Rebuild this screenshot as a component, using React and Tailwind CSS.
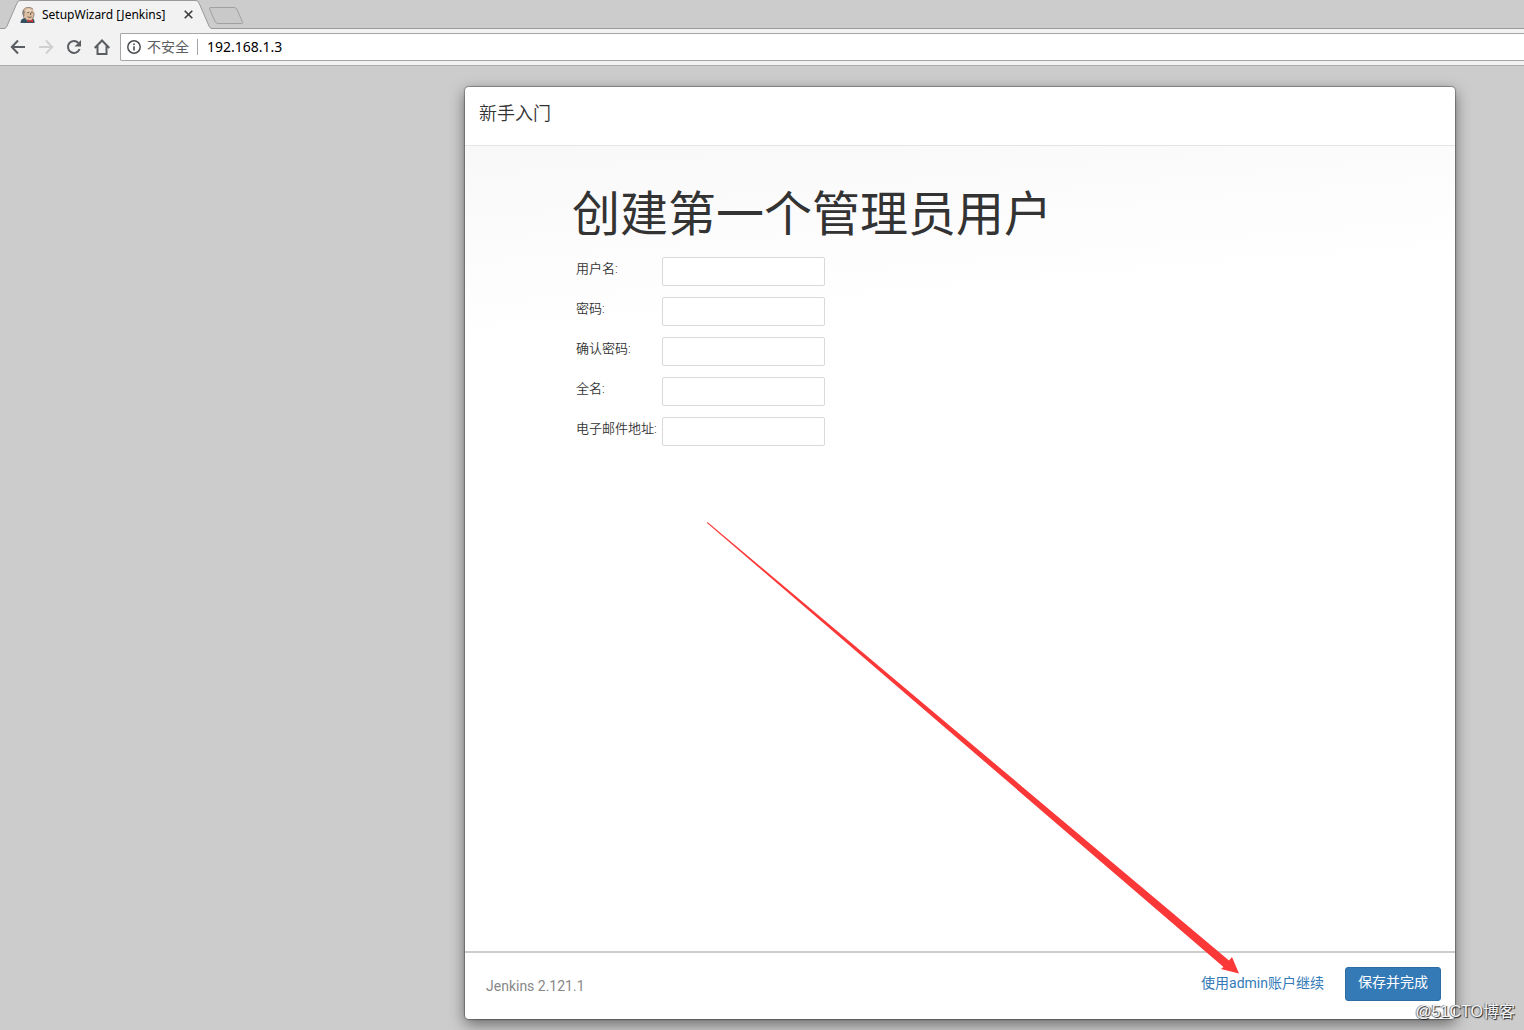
import React, { useState } from 'react';

// Campos del formulario del primer administrador
const FIELDS = [
  { id: 'username', label: '用户名:', type: 'text' },
  { id: 'password1', label: '密码:', type: 'password' },
  { id: 'password2', label: '确认密码:', type: 'password' },
  { id: 'fullname', label: '全名:', type: 'text' },
  { id: 'email', label: '电子邮件地址:', type: 'text' },
];

// --- Iconos ---
function JenkinsIcon() {
  return (
    <svg viewBox="0 0 16 16" className="h-4 w-4 shrink-0" aria-hidden="true">
      <path d="M.5 16c0-3 1.500-4.500 4.500-5h6c3 .5 3.500 2 3.500 5z" fill="#34505f" />
      <path d="M6 11.500h6l.5 2H7z" fill="#e8ecee" />
      <path d="M3 6C2.500 2.500 5 .5 8.500.5c3.500 0 5.500 2 5.500 6 0 4-1.500 7-4.500 7C6 13.500 3.500 10 3 6z" fill="#dcbd9f" />
      <path d="M6 3C7.500 1.300 10 1.300 11.500 3v2H6z" fill="#ead3bb" />
      <path d="M3.300 9C1.500 7 2 3 4.500 1.500 3.800 3.500 5.200 5 4.600 6.500c-.8.500-.6 1.800.4 2.500z" fill="#8a8079" />
      <path d="M4.500 1.500C7 0 11 0 13 2.300M14 5.500c.2 3-.5 5-1.600 6.500M3.300 9c.5 2 2 3 3 3.500" fill="none" stroke="#7b6a60" strokeWidth=".8" />
      <path d="M7.300 5.500l2-.3M11 5.200l1.700.2M7.700 9.800c1.200.7 2.800.7 3.800 0M10.600 6v2" fill="none" stroke="#5b4a42" strokeWidth=".9" />
      <path d="M7.500 12.200l2.500 1.300 3-1.300v3.300l-3-1-2.500 1z" fill="#c8322f" />
    </svg>
  );
}

function BackIcon() {
  return (
    <svg viewBox="0 0 16 16" className="h-4 w-4" fill="none" stroke="currentColor" strokeWidth="2" aria-hidden="true">
      <path d="M15 8H2.500M8 1.500L1.800 8 8 14.500" />
    </svg>
  );
}

function ForwardIcon() {
  return (
    <svg viewBox="0 0 16 16" className="h-4 w-4" fill="none" stroke="currentColor" strokeWidth="2" aria-hidden="true">
      <path d="M1 8h12.500M8 1.500L14.200 8 8 14.500" />
    </svg>
  );
}

function ReloadIcon() {
  return (
    <svg viewBox="0 0 16 16" className="h-4 w-4" aria-hidden="true">
      <path d="M13.600 10A6 6 0 1 1 12.400 3.900" fill="none" stroke="currentColor" strokeWidth="2" />
      <path d="M15 1v6.500H8.500z" fill="currentColor" />
    </svg>
  );
}

function HomeIcon() {
  return (
    <svg viewBox="0 0 16 16" className="h-4 w-4" fill="none" stroke="currentColor" strokeWidth="2" aria-hidden="true">
      <path d="M.7 9L8 1.500 15.300 9M3.500 7v8h9V7" />
    </svg>
  );
}

function InfoIcon() {
  return (
    <svg viewBox="0 0 14 14" className="h-3.5 w-3.5 shrink-0" fill="none" stroke="#4a4d50" aria-hidden="true">
      <circle cx="7" cy="7" r="6.200" strokeWidth="1.500" />
      <path d="M7 6.200v4.300M7 3.500v1.500" strokeWidth="1.600" />
    </svg>
  );
}

// --- Barra del navegador ---
function BrowserBar() {
  return (
    <header className="font-['Noto_Sans','Noto_Sans_CJK_SC',sans-serif]">
      <div className="relative flex h-[29px] border-b border-[#999] bg-[#ccc]">
        <div className="relative -mb-px flex h-[29px] w-[212px] items-center pl-5">
          <svg viewBox="0 0 212 29" className="absolute inset-0 h-full w-full" aria-hidden="true">
            <path d="M0 28.500H4Q6 28.500 7 26L17 3Q18 .5 20 .5H196Q198 .5 199 3L209 26Q210 28.500 212 28.500V29H0z" fill="#f2f2f2" />
            <path d="M0 28.500H4Q6 28.500 7 26L17 3Q18 .5 20 .5H196Q198 .5 199 3L209 26Q210 28.500 212 28.500" fill="none" stroke="#999" />
          </svg>
          <div className="relative flex w-full items-center">
            <JenkinsIcon />
            <span className="ml-1.5 w-[136px] whitespace-nowrap text-xs text-black">SetupWizard [Jenkins]</span>
            <button type="button" aria-label="关闭" className="ml-1.5 text-[#3c3c3c]">
              <svg viewBox="0 0 9 9" className="h-[9px] w-[9px]" stroke="currentColor" strokeWidth="1.600" aria-hidden="true">
                <path d="M.7.7l7.600 7.600M8.300.7L.7 8.300" />
              </svg>
            </button>
          </div>
        </div>
        <button type="button" aria-label="新标签页" className="-ml-1 self-center">
          <svg viewBox="0 0 36 18" className="mt-1 h-[18px] w-9" aria-hidden="true">
            <path d="M3 .5H26Q28 .5 29 2.500L34.500 15Q35 16.500 33.500 16.500H10Q8 16.500 7 14.500L1.500 2Q1 .5 3 .5z" fill="#c9c9c9" stroke="#a0a0a0" />
          </svg>
        </button>
      </div>
      <nav className="flex h-[37px] items-center border-b border-[#aaa] bg-[#f2f2f2] pl-2.5 text-[#5a5d61]">
        <div className="flex w-[110px] gap-3">
          <button type="button" aria-label="后退"><BackIcon /></button>
          <button type="button" aria-label="前进" className="text-[#d0d0d0]"><ForwardIcon /></button>
          <button type="button" aria-label="重新加载"><ReloadIcon /></button>
          <button type="button" aria-label="主页"><HomeIcon /></button>
        </div>
        <div className="flex h-7 flex-1 items-center rounded-l-xs border border-r-0 border-[#a6a6a6] bg-white pl-1.5">
          <InfoIcon />
          <span className="ml-1.5 text-sm text-[#5a5d61]">不安全</span>
          <span className="mr-[9px] ml-2 h-4 w-px bg-[#a6a6a6]" />
          <input
            type="text"
            aria-label="地址"
            defaultValue="192.168.1.3"
            className="min-w-0 flex-1 text-sm text-black outline-none"
          />
        </div>
      </nav>
    </header>
  );
}

// Flecha roja que señala el enlace para continuar
function Arrow() {
  return (
    <svg
      viewBox="0 0 534 454"
      className="pointer-events-none absolute right-[215px] bottom-[44px] h-[454px] w-[534px]"
      aria-hidden="true"
    >
      <path d="M1.500 1L523 439.500 526 436 533 452.500 515 448 517.500 446 1 2z" fill="#fb3838" />
    </svg>
  );
}

// --- Componente Principal ---
export default function App() {
  const [form, setForm] = useState({});

  const handleChange = (e) => {
    setForm({ ...form, [e.target.id]: e.target.value });
  };

  return (
    <div className="relative flex min-h-screen flex-col bg-[#ccc]">
      <BrowserBar />

      <main className="flex flex-1 justify-end pt-[21px] pr-[69px] pb-[11px] pl-4 font-['Roboto','Noto_Sans_CJK_SC',sans-serif] text-[#333]">
        <div className="relative flex w-full max-w-[990px] flex-col rounded-[4px] bg-white shadow-[0_0_1px_1px_rgba(0,0,0,0.3),0_5px_15px_rgba(0,0,0,0.5)]">
          <div className="h-[59px] border-b border-[#e5e5e5] px-3.5 pt-[15px]">
            <h4 className="text-lg leading-6 font-[350]">新手入门</h4>
          </div>

          <form
            id="setup"
            onSubmit={(e) => e.preventDefault()}
            className="flex-1 bg-[linear-gradient(175deg,#f8f8f8,#fff_200px)] pt-[41px] pl-[107px]"
          >
            <h1 className="text-5xl leading-[56px] font-normal">创建第一个管理员用户</h1>
            <table className="mt-[7px] text-[13px] leading-5">
              <tbody>
                {FIELDS.map((field) => (
                  <tr key={field.id} className="h-10">
                    <td className="pt-[9px] pr-1 pl-1 align-top">
                      <label htmlFor={field.id} className="font-[350]">{field.label}</label>
                    </td>
                    <td className="pt-[7px] pl-px align-top">
                      <input
                        id={field.id}
                        type={field.type}
                        value={form[field.id] || ''}
                        onChange={handleChange}
                        className="block h-[29px] w-[163px] rounded-xs border border-[#d9d9d9] bg-white px-1.5 outline-none"
                      />
                    </td>
                  </tr>
                ))}
              </tbody>
            </table>
          </form>

          <footer className="flex h-[68px] items-center border-t-2 border-[#ccc] pr-3.5 pb-1 pl-[21px] text-sm">
            <span className="flex-1 pt-1 text-[#888]">Jenkins 2.121.1</span>
            <a href="#admin" className="mr-[21px] pb-0.5 text-[#337ab7]">使用admin账户继续</a>
            <button
              type="submit"
              form="setup"
              className="h-[34px] rounded-[3px] border border-[#2e6da4] bg-[#337ab7] px-3 pb-1 text-white"
            >
              保存并完成
            </button>
          </footer>

          <Arrow />
        </div>
      </main>

      {/* Marca de agua */}
      <div className="absolute right-[9px] bottom-1.5 font-['Liberation_Sans','Noto_Sans_CJK_SC',sans-serif] text-base leading-6 text-[#f4f4f4] [text-shadow:1px_1px_1px_#222,-1px_0_1px_#777]">
        @51CTO博客
      </div>
    </div>
  );
}
